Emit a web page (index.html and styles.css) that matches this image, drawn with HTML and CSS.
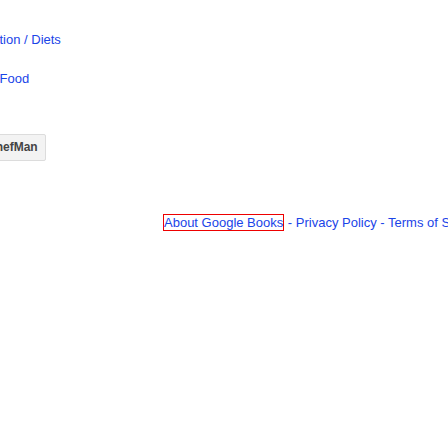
FILE: index.html
```html
<!DOCTYPE html>
<html>
<head>
<meta charset="utf-8">
<link rel="stylesheet" href="styles.css">
</head>
<body>
<div class="page">
  <div class="side">
    <div class="meta-line cut-a"><span class="link">Nutrition / Diets</span></div>
    <div class="meta-line cut-b"><span class="link">Raw Food</span></div>
    <div class="btn-row"><span class="btn">ChefMan</span></div>
  </div>
  <div class="footer">
    <span class="link boxed">About Google Books</span> - <span class="link">Privacy Policy</span> - <span class="link">Terms of Service</span> - <span class="link">Information for Publishers</span>
  </div>
</div>
</body>
</html>
```

FILE: styles.css
```css
html, body {
  margin: 0;
  padding: 0;
  background: #fff;
  overflow: hidden;
}
body {
  width: 448px;
  height: 448px;
  font-family: "Liberation Sans", Arial, sans-serif;
  font-size: 13px;
  color: #222;
}
.page {
  width: 448px;
  overflow: hidden;
}
.side {
  padding-top: 32px;
  display: flex;
  flex-direction: column;
  align-items: flex-start;
}
.meta-line {
  line-height: 16px;
  white-space: nowrap;
}
.cut-a { margin-left: -28px; }
.cut-b { margin-left: -30px; margin-top: 23px; }
.link {
  color: #1a44e8;
  cursor: pointer;
}
.btn-row {
  margin-top: 47px;
  margin-left: -22px;
}
.btn {
  display: inline-block;
  height: 25px;
  line-height: 25px;
  padding: 0 7px 0 8px;
  border: 1px solid #dcdcdc;
  border-radius: 2px;
  background: #f3f3f3;
  font-weight: bold;
  font-size: 12px;
  color: #444;
}
.footer {
  margin-top: 54px;
  padding-left: 163px;
  white-space: nowrap;
  line-height: 16px;
  color: #1a44e8;
}
.boxed {
  border: 1px solid #e00;
}
```
